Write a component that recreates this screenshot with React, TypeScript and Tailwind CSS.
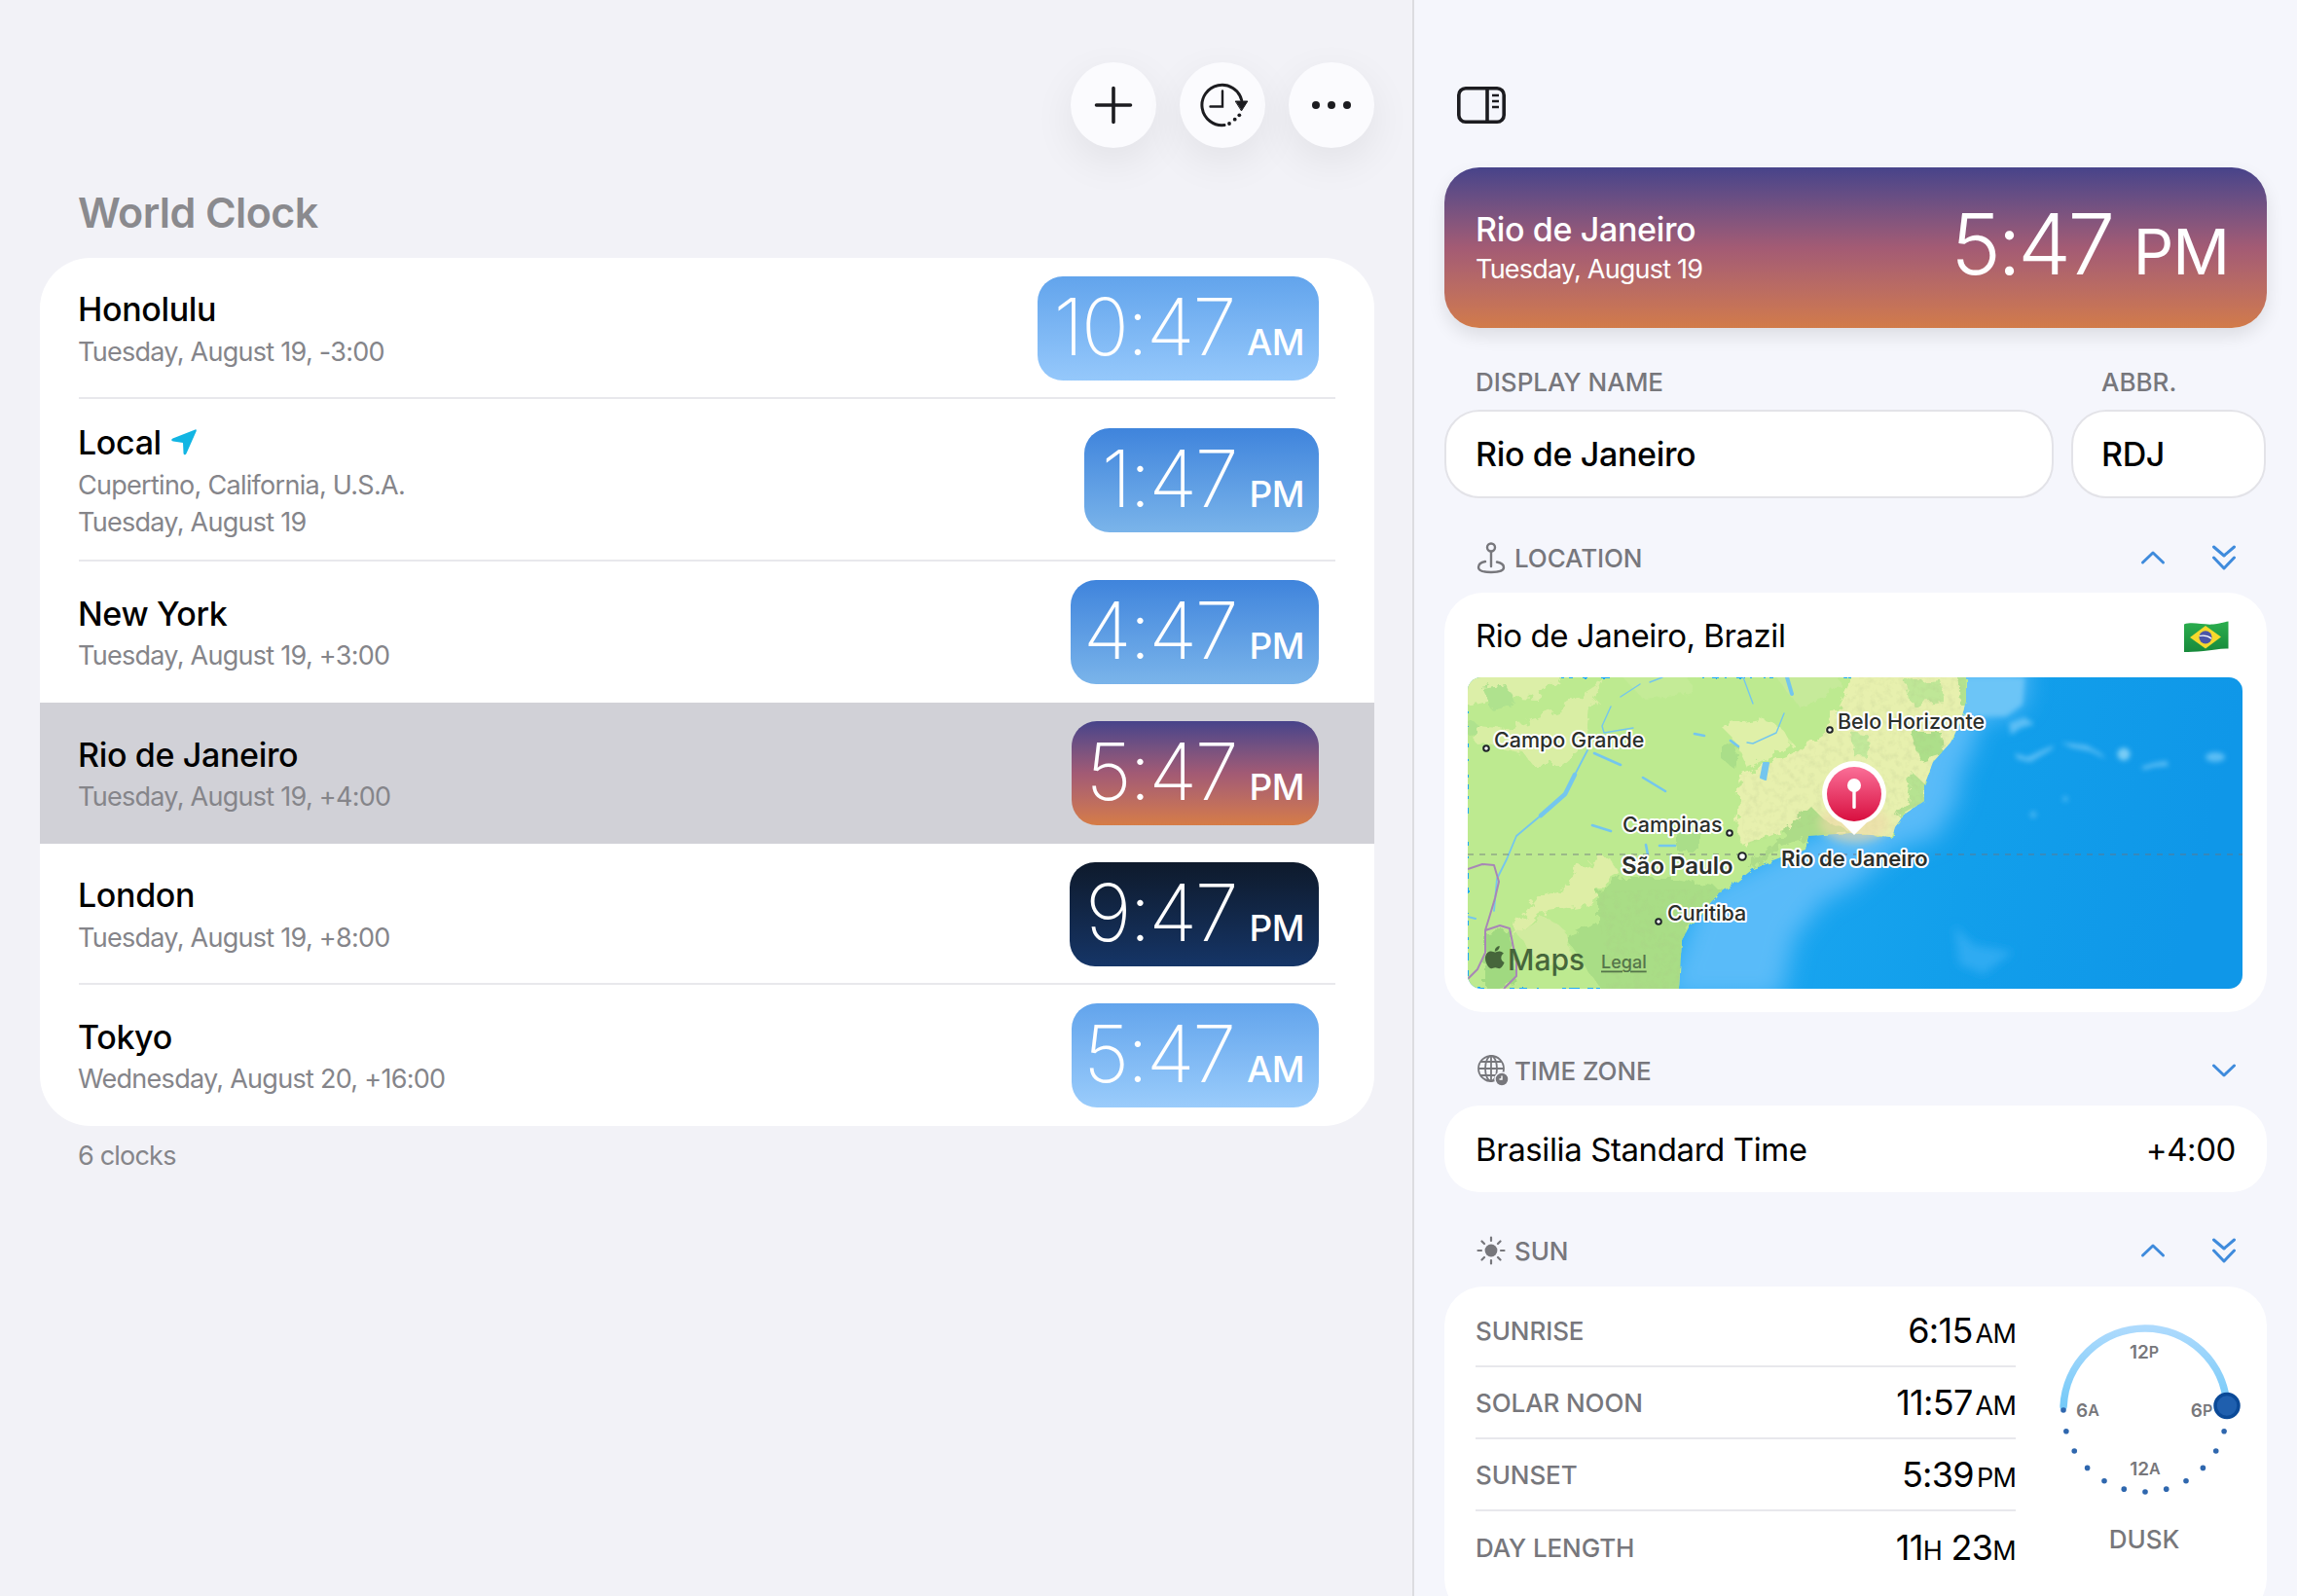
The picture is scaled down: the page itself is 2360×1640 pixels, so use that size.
import React from "react";

type Clock = { name: string; lines: string[]; time: string; unit: string; grad: string; width: string; selected?: boolean; local?: boolean; sep: boolean; tall?: boolean };

const clocks: Clock[] = [
  { name: "Honolulu", lines: ["Tuesday, August 19, -3:00"], time: "10:47", unit: "AM", grad: "bg-gradient-to-b from-[#62a4ec] to-[#95c8fb]", width: "w-[289px]", sep: true },
  { name: "Local", local: true, lines: ["Cupertino, California, U.S.A.", "Tuesday, August 19"], time: "1:47", unit: "PM", grad: "bg-gradient-to-b from-[#3f84dc] to-[#7ab4ea]", width: "w-[241px]", sep: true, tall: true },
  { name: "New York", lines: ["Tuesday, August 19, +3:00"], time: "4:47", unit: "PM", grad: "bg-gradient-to-b from-[#3f84dc] to-[#7ab4ea]", width: "w-[255px]", sep: false },
  { name: "Rio de Janeiro", selected: true, lines: ["Tuesday, August 19, +4:00"], time: "5:47", unit: "PM", grad: "bg-gradient-to-b from-[#47438a] via-[#a25a74] to-[#d67c45]", width: "w-[254px]", sep: false },
  { name: "London", lines: ["Tuesday, August 19, +8:00"], time: "9:47", unit: "PM", grad: "bg-gradient-to-b from-[#0e1a2c] to-[#153567]", width: "w-[256px]", sep: true },
  { name: "Tokyo", lines: ["Wednesday, August 20, +16:00"], time: "5:47", unit: "AM", grad: "bg-gradient-to-b from-[#62a4ec] to-[#9accfb]", width: "w-[254px]", sep: false },
];

function Chevron({ dir }: { dir: "up" | "down" }) {
  return (
    <svg width="26" height="20" viewBox="0 0 26 20" fill="none" stroke="#3f8bdc" strokeWidth="3" strokeLinecap="round" strokeLinejoin="round">
      <path d={dir === "up" ? "M2.5 15 L13 5 L23.5 15" : "M2.5 5 L13 15 L23.5 5"} />
    </svg>
  );
}

function DoubleDown() {
  return (
    <svg width="26" height="28" viewBox="0 0 26 28" fill="none" stroke="#3f8bdc" strokeWidth="3" strokeLinecap="round" strokeLinejoin="round">
      <path d="M2.5 3 L13 12 L23.5 3" />
      <path d="M2.5 14 L13 25 L23.5 14" />
    </svg>
  );
}

function SectionHead({ icon, title, mode }: { icon: React.ReactNode; title: string; mode: "both" | "down" }) {
  return (
    <div className="flex h-[40px] items-center pl-[64px] pr-[62px]">
      <div className="flex w-[39px] items-center">{icon}</div>
      <span className="text-[26px] font-medium tracking-[-0.1px] text-[#77777c]">{title}</span>
      <div className="ml-auto flex items-center gap-[47px]">
        {mode === "both" && <Chevron dir="up" />}
        {mode === "both" ? <DoubleDown /> : <Chevron dir="down" />}
      </div>
    </div>
  );
}

function RoundButton({ children }: { children: React.ReactNode }) {
  return (
    <button className="flex h-[88px] w-[88px] items-center justify-center rounded-full bg-[#fbfbfe] shadow-[0_14px_44px_rgba(0,0,0,0.07)]">
      {children}
    </button>
  );
}

function Row({ c }: { c: Clock }) {
  return (
    <div className={`pl-[40px] ${c.selected ? "bg-[#d1d1d7]" : ""}`}>
      <div className={`flex ${c.tall ? "h-[167px]" : "h-[145px]"} items-center justify-between ${c.sep ? "mr-[40px] border-b-2 border-[#e8e8ec] pr-[17px] pt-[2px]" : "pr-[57px]"}`}>
        <div className={`-ml-[1px] ${c.sep ? "pt-[2px]" : "pt-[3px]"}`}>
          <div className="flex h-[42px] items-center gap-[10px] text-[34px] font-medium tracking-[-0.35px] text-black">
            {c.name}
            {c.local && (
              <svg width="26" height="28" viewBox="0 0 26 28">
                <path d="M24.5 1.5 C25.5 1 26 2 25.7 3 L15.5 26 C14.5 28 12.5 27.5 12.5 25.5 L12 15 L2 13.5 C0 13 -0.5 11.5 1.5 10.5 Z" fill="#12b5e3" />
              </svg>
            )}
          </div>
          <div className={`${c.sep ? "mt-[5px]" : "mt-[4px]"} text-[27px] leading-[38px] tracking-[-0.72px] text-[#85858a]`}>
            {c.lines.map((l) => (
              <div key={l}>{l}</div>
            ))}
          </div>
        </div>
        <div className={`flex h-[107px] ${c.width} items-baseline justify-end rounded-[26px] pr-[15px] pt-[2px] text-white ${c.grad}`}>
          <span className="text-[81px] font-[250] leading-[100px] tracking-[-2.2px]">{c.time}</span>
          <span className="ml-[13px] text-[37px] font-medium tracking-[-0.5px]">{c.unit}</span>
        </div>
      </div>
    </div>
  );
}

function BrazilMap() {
  const label = "fill-[#2b2f2b] [paint-order:stroke] [stroke:white] [stroke-width:4px] [stroke-linejoin:round]";
  const cities: [number, number, number][] = [[19, 73, 2.8], [372, 54, 2.8], [269, 160, 2.8], [282, 184, 3.8], [196, 251, 2.8]];
  return (
    <svg width="796" height="320" viewBox="0 0 796 320" className="block rounded-[14px]">
      <defs>
        <linearGradient id="sea" x1="0" x2="1" y1="0" y2="0.1">
          <stop offset="0.3" stopColor="#1ea9f3" />
          <stop offset="0.7" stopColor="#129feb" />
          <stop offset="1" stopColor="#0f97e8" />
        </linearGradient>
        <linearGradient id="pinFill" x1="0" x2="0" y1="0" y2="1">
          <stop offset="0" stopColor="#fa6f98" />
          <stop offset="1" stopColor="#d80f3f" />
        </linearGradient>
        <filter id="blur12" x="-20%" y="-20%" width="140%" height="140%"><feGaussianBlur stdDeviation="12" /></filter>
        <filter id="blur4" x="-20%" y="-20%" width="140%" height="140%"><feGaussianBlur stdDeviation="5" /></filter>
        <filter id="blur2" x="-30%" y="-30%" width="160%" height="160%"><feGaussianBlur stdDeviation="2.4" /></filter>
        <filter id="rough" x="-5%" y="-5%" width="110%" height="110%">
          <feTurbulence type="fractalNoise" baseFrequency="0.09" numOctaves="3" seed="4" result="n" />
          <feDisplacementMap in="SourceGraphic" in2="n" scale="14" />
          <feGaussianBlur stdDeviation="0.7" />
        </filter>
        <filter id="roughS" x="-5%" y="-5%" width="110%" height="110%">
          <feTurbulence type="fractalNoise" baseFrequency="0.12" numOctaves="2" seed="7" result="n" />
          <feDisplacementMap in="SourceGraphic" in2="n" scale="6" />
        </filter>
        <filter id="hill" x="0" y="0" width="100%" height="100%">
          <feTurbulence type="fractalNoise" baseFrequency="0.14" numOctaves="3" seed="9" />
          <feColorMatrix values="0 0 0 0 0.42  0 0 0 0 0.5  0 0 0 0 0.25  0 0 0 1.7 -0.78" />
          <feComposite in2="SourceAlpha" operator="in" />
        </filter>
        <clipPath id="land">
          <path d="M0 0 H512 L512 24 L506 47 L496 67 L478 87 L469 111 L469 127 L448 141 L439 154 L436 164 L393 160 L350 163 L347 177 L320 187 L293 197 L273 213 L257 223 L227 257 L220 270 L217 320 H0 Z" />
        </clipPath>
      </defs>
      <rect width="796" height="320" fill="url(#sea)" />
      <path d="M500 -20 L575 -20 L573 25 L555 40 L525 42 L520 70 L505 100 L503 125 L480 165 L440 175 L395 215 L365 230 L335 268 L322 330 L200 330 L240 220 L380 150 L470 60 Z" fill="#5fbef9" fillOpacity="0.9" filter="url(#blur12)" />
      <path d="M505 0 H572 L570 28 L553 40 L510 40 Z" fill="#6cc5f7" filter="url(#blur2)" />
      <g fill="#5cbef5" filter="url(#blur2)">
        <path d="M556 47 L572 41 L582 48 L568 52 L558 59 Z" />
        <path d="M562 78 L575 82 L592 74 L602 70 L600 74 L578 87 L565 84 Z" />
        <path d="M610 67 L620 68 L636 70 L650 78 L656 84 L640 76 L620 72 Z" />
        <circle cx="674" cy="79" r="6.5" fill="#7acdf6" />
        <path d="M692 92 L705 88 L718 86 L720 91 L705 92 L695 95 Z" />
        <ellipse cx="768" cy="82" rx="10" ry="5" />
        <circle cx="614" cy="125" r="3" fill="#3fb3f2" />
        <circle cx="581" cy="141" r="3.5" fill="#3fb3f2" />
      </g>
      <g fill="#2eabf2" filter="url(#blur4)">
        <path d="M500 255 L520 275 L560 282 L530 305 L505 295 Z" />
      </g>
      <path d="M0 0 H512 L512 24 L506 47 L496 67 L478 87 L469 111 L469 127 L448 141 L439 154 L436 164 L393 160 L350 163 L347 177 L320 187 L293 197 L273 213 L257 223 L227 257 L220 270 L217 320 H0 Z" fill="#bdea90" filter="url(#roughS)" />
      <g clipPath="url(#land)">
        <g filter="url(#rough)">
          <path d="M-10 -10 H105 L70 22 L30 20 L-10 30 Z" fill="#dcefa8" />
          <path d="M15 12 L40 8 L50 28 L25 34 Z M0 45 L14 50 L5 62 L-5 60 Z" fill="#afe28e" />
          <path d="M93 33 L140 3 L127 33 L123 67 L97 90 L67 90 L57 77 L7 67 L10 50 L40 53 Z" fill="#d9eea4" />
          <path d="M150 -10 H235 L225 18 L180 22 Z" fill="#c4eb97" />
          <path d="M260 50 L300 43 L320 50 L333 67 L320 77 L287 93 L273 63 Z" fill="#dff0a8" />
          <path d="M280 100 L333 80 L367 57 L400 -10 H520 L515 40 L500 70 L480 90 L472 125 L450 145 L440 170 L390 168 L355 150 L327 157 L283 173 L277 160 Z" fill="#e7f0ae" />
          <path d="M310 -10 H395 L370 20 L340 30 Z" fill="#c6ea9a" />
          <path d="M450 5 L485 2 L490 25 L455 28 Z" fill="#bfe797" />
          <path d="M504 -5 H520 V28 L506 28 Z" fill="#b3e28f" />
          <path d="M454 57 L488 57 L490 77 L464 85 Z" fill="#addf8a" />
          <path d="M392 55 L412 60 L410 82 L395 80 Z" fill="#c2e99b" />
          <path d="M456 97 L472 112 L470 130 L441 146 L452 127 Z" fill="#b6e391" />
          <path d="M287 197 L353 133 L366 146 L395 160 L350 165 L317 176 L293 195 Z" fill="#addc88" />
          <path d="M70 227 L100 217 L110 197 L143 183 L157 203 L133 217 L130 233 L73 243 L47 267 L50 253 Z" fill="#deeea6" />
          <path d="M133 220 L160 207 L213 207 L262 217 L227 257 L220 330 L143 330 L100 267 L133 253 Z" fill="#a9dd86" />
          <path d="M50 262 L80 245 L100 260 L110 300 L70 290 Z" fill="#d1eb9f" />
          <path d="M18 262 L43 258 L50 317 L18 322 Z" fill="#a0d980" />
          <path d="M260 67 L277 70 L273 93 L260 83 Z M215 160 L240 158 L240 178 L215 178 Z" fill="#aade89" />
        </g>
        <path d="M280 100 L333 80 L367 57 L400 0 H512 L500 70 L470 125 L440 165 L355 150 L283 173 Z" fill="black" filter="url(#hill)" opacity="0.28" />
        <path d="M133 220 L260 217 L227 257 L218 320 L143 320 Z" fill="black" filter="url(#hill)" opacity="0.22" />
        <g fill="none" stroke="#74c6ee" strokeLinecap="round" strokeLinejoin="round">
          <path d="M123 75 L110 100 M75 142 L50 163 L40 187 L30 207 L27 240" strokeWidth="1.8" />
          <path d="M110 100 L100 120 L75 142" strokeWidth="4.5" />
          <path d="M177 7 L157 20 M147 30 L138 50 L140 57 L170 52 M187 5 L200 0 M325 37 L317 57 L293 68 L287 67 M283 0 L293 27" strokeWidth="1.4" />
          <path d="M130 78 L157 90 M180 103 L203 117 M128 152 L147 158 M233 58 L243 60 M197 173 L213 173 M183 172 L185 182 M270 65 L278 71" strokeWidth="2.6" />
          <path d="M328 0 L333 17" strokeWidth="4" />
          <path d="M0 246 L8 248" strokeWidth="2" />
          <path d="M304 88 L309 88 L306 105 L301 103 Z" fill="#74c6ee" strokeWidth="2" />
        </g>
        <g fill="none" stroke="#a886b6" strokeWidth="2" strokeLinejoin="round">
          <path d="M0 197 L15 192 L27 193 L32 210 L28 227 L22 247 L18 260 L33 255 L43 258 L50 293 L50 307 L37 320" />
          <path d="M18 260 L18 283 L10 300 L0 310" />
        </g>
      </g>
      <line x1="0" x2="796" y1="182" y2="182" stroke="#6b7280" strokeOpacity="0.55" strokeWidth="1.6" strokeDasharray="6 6" />
      {cities.map(([x, y, r]) => (
        <circle key={x} cx={x} cy={y} r={r} fill="white" stroke="#1f2328" strokeWidth="2" />
      ))}
      <g fontFamily="Inter, sans-serif" fontWeight="500" dominantBaseline="central">
        <text x="27" y="64" fontSize="21.5" className={label}>Campo Grande</text>
        <text x="380" y="45" fontSize="21.5" className={label}>Belo Horizonte</text>
        <text x="159" y="151" fontSize="21.5" className={label}>Campinas</text>
        <text x="158" y="193" fontSize="24" fontWeight="600" className={label}>São Paulo</text>
        <text x="322" y="186" fontSize="22" fontWeight="600" className={label}>Rio de Janeiro</text>
        <text x="205" y="242" fontSize="21.5" className={label}>Curitiba</text>
        <text x="41" y="290" fontSize="30" fill="#46663b">Maps</text>
        <text x="137" y="292" fontSize="18" fill="#55744a" textDecoration="underline">Legal</text>
      </g>
      <g transform="translate(17.8 274.3) scale(0.052)">
        <path fill="#46663b" d="M318.7 268.7c-.2-36.7 16.4-64.4 50-84.8-18.8-26.9-47.2-41.7-84.7-44.6-35.5-2.8-74.3 20.7-88.5 20.7-15 0-49.4-19.7-76.4-19.7C63.3 141.2 4 184.8 4 273.5q0 39.3 14.4 81.2c12.8 36.7 59 126.7 107.2 125.2 25.2-.6 43-17.9 75.8-17.9 31.8 0 48.3 17.9 76.4 17.9 48.6-.7 90.4-82.5 102.6-119.3-65.2-30.7-61.7-90-61.7-91.9zm-56.6-164.2c27.3-32.4 24.8-61.9 24-72.5-24.1 1.4-52 16.4-67.9 34.9-17.5 19.8-27.8 44.3-25.6 71.9 26.1 2 49.9-11.4 69.5-34.3z" />
      </g>
      <ellipse cx="397" cy="150" rx="36" ry="20" fill="#f0d8a8" fillOpacity="0.6" filter="url(#blur4)" />
      <path d="M397 86 a33 33 0 0 1 13 63.3 L397 162 L384 149.3 A33 33 0 0 1 397 86 Z" fill="white" />
      <circle cx="397" cy="120" r="28" fill="url(#pinFill)" />
      <circle cx="397" cy="111" r="7" fill="white" />
      <rect x="395.3" y="113" width="3.4" height="22" rx="1.5" fill="white" />
    </svg>
  );
}

function Dial() {
  const dots: [number, number][] = [];
  for (let i = 0; i <= 12; i++) {
    const a = ((i * 15) * Math.PI) / 180;
    dots.push([100 - 84 * Math.cos(a), 109 + 84 * Math.sin(a)]);
  }
  return (
    <svg width="200" height="280" viewBox="0 0 200 280" className="shrink-0">
      <defs>
        <linearGradient id="arcG" x1="0" x2="0" y1="0" y2="1">
          <stop offset="0" stopColor="#addafd" />
          <stop offset="1" stopColor="#75caf8" />
        </linearGradient>
      </defs>
      <path d="M16.1 105 A84 84 0 0 1 183.9 104.6" fill="none" stroke="url(#arcG)" strokeWidth="7.5" strokeLinecap="round" />
      {dots.map(([x, y], i) => (
        <circle key={i} cx={x} cy={y} r="2.8" fill="#2f67ae" />
      ))}
      <circle cx="184" cy="104.5" r="12" fill="#1f5fae" stroke="#0b4a98" strokeWidth="3.5" />
      <g fontFamily="Inter, sans-serif" textAnchor="middle" dominantBaseline="central" fontSize="19" fontWeight="600" fill="#77777b">
        <text x="99" y="49">12<tspan fontSize="16">P</tspan></text>
        <text x="41" y="109">6<tspan fontSize="16">A</tspan></text>
        <text x="158" y="109">6<tspan fontSize="16">P</tspan></text>
        <text x="100" y="169">12<tspan fontSize="16">A</tspan></text>
        <text x="99" y="241" fontSize="26" fontWeight="500">DUSK</text>
      </g>
    </svg>
  );
}

const unit = "ml-[3px] text-[27px] tracking-[-0.8px]";
const sunRows: { label: string; value: React.ReactNode }[] = [
  { label: "SUNRISE", value: <>6:15<small className={unit}>AM</small></> },
  { label: "SOLAR NOON", value: <>11:57<small className={unit}>AM</small></> },
  { label: "SUNSET", value: <>5:39<small className={unit}>PM</small></> },
  { label: "DAY LENGTH", value: <>11<small className="text-[27px]">H</small> 23<small className="text-[27px]">M</small></> },
];

export default function App() {
  return (
    <div className="flex h-[1640px] w-[2360px] overflow-hidden font-['Inter',sans-serif] text-black">
      <main className="h-full w-[1451px] shrink-0 bg-[#f2f2f7] pl-[41px] pr-[39px]">
        <div className="flex justify-end gap-[24px] pt-[64px]">
          <RoundButton>
            <svg width="40" height="40" viewBox="0 0 40 40" stroke="#1c1c20" strokeWidth="3.6" strokeLinecap="round">
              <path d="M20 2.5 V37.5 M2.5 20 H37.5" />
            </svg>
          </RoundButton>
          <RoundButton>
            <svg width="56" height="56" viewBox="-28 -28 56 56" fill="none" stroke="#1c1c20" strokeWidth="3" strokeLinecap="round">
              <path d="M19.7 -5 A20.7 20.7 0 1 0 2 20.6" />
              <path d="M0 -14.5 V1.5 H-12.5" strokeWidth="2.4" />
              <path d="M13.6 -4 H25.8 L19.7 5.6 Z" fill="#1c1c20" stroke="#1c1c20" strokeWidth="1" strokeLinejoin="round" />
              <circle cx="7" cy="19" r="1.9" fill="#1c1c20" stroke="none" />
              <circle cx="12.7" cy="14.7" r="1.9" fill="#1c1c20" stroke="none" />
              <circle cx="17.3" cy="10.3" r="1.9" fill="#1c1c20" stroke="none" />
            </svg>
          </RoundButton>
          <RoundButton>
            <svg width="44" height="12" viewBox="0 0 44 12" fill="#1c1c20">
              <circle cx="6" cy="6" r="4" />
              <circle cx="22" cy="6" r="4" />
              <circle cx="38" cy="6" r="4" />
            </svg>
          </RoundButton>
        </div>
        <h1 className="mt-[40px] h-[52px] pl-[39px] text-[43px] font-semibold leading-[52px] tracking-[-0.6px] text-[#8a8a8e]">World Clock</h1>
        <section className="mt-[21px] w-[1371px] overflow-hidden rounded-[52px] bg-white">
          {clocks.map((c) => (
            <Row key={c.time + c.name} c={c} />
          ))}
        </section>
        <p className="mt-[14px] pl-[39px] text-[27px] leading-[34px] tracking-[-0.8px] text-[#85858a]">6 clocks</p>
      </main>

      <aside className="h-full flex-1 border-l-2 border-[#dcdce0] bg-[#f5f6fc]">
        <div className="pl-[42px] pt-[87px]">
          <svg width="54" height="42" viewBox="0 0 54 42" fill="none" stroke="#1c1c20" strokeWidth="3.6" className="block">
            <rect x="3.8" y="3.8" width="46.4" height="34.4" rx="7" />
            <path d="M33 3.8 V38.2" />
            <path d="M38 11 H45 M38 17 H45 M38 23 H45" strokeWidth="2.6" />
          </svg>
        </div>

        <div className="mx-[31px] mt-[43px] flex h-[165px] items-center justify-between rounded-[36px] bg-gradient-to-b from-[#47438a] via-[#a35b74] to-[#d27b49] pl-[32px] pr-[39px] text-white shadow-[0_8px_18px_rgba(0,0,0,0.10)]">
          <div>
            <div className="text-[34px] font-medium leading-[42px] tracking-[-0.35px]">Rio de Janeiro</div>
            <div className="mt-[2px] text-[27px] leading-[36px] tracking-[-0.8px]">Tuesday, August 19</div>
          </div>
          <div className="flex items-baseline">
            <span className="text-[87px] font-[280] leading-[100px] tracking-[-3.5px]">5:47</span>
            <span className="ml-[22px] text-[65px] font-normal leading-[100px] tracking-[-1px]">PM</span>
          </div>
        </div>

        <div className="ml-[31px] mr-[31px] mt-[41px] grid grid-cols-[626px_200px] gap-x-[18px] gap-y-[13px]">
          <span className="h-[30px] pl-[32px] text-[26px] font-medium leading-[30px] text-[#77777c]">DISPLAY NAME</span>
          <span className="h-[30px] pl-[31px] text-[26px] font-medium leading-[30px] text-[#77777c]">ABBR.</span>
          <div className="flex h-[91px] items-center rounded-[36px] border-2 border-[#e3e3e8] bg-white pl-[30px] text-[34px] font-medium tracking-[-0.35px]">Rio de Janeiro</div>
          <div className="flex h-[91px] items-center rounded-[36px] border-2 border-[#e3e3e8] bg-white pl-[29px] text-[34px] font-medium tracking-[-0.35px]">RDJ</div>
        </div>

        <div className="mt-[41px]">
          <SectionHead
            title="LOCATION"
            mode="both"
            icon={
              <svg width="30" height="34" viewBox="0 0 30 34" fill="none" stroke="#77777c" strokeWidth="2.4" strokeLinecap="round">
                <circle cx="15" cy="6.5" r="4" />
                <path d="M15 11 V26" />
                <path d="M9 21 C4 22 2 24.5 2 27 C2 30.5 7 32 15 32 C23 32 28 30.5 28 27 C28 24.5 26 22.5 21 21.5" />
              </svg>
            }
          />
        </div>
        <section className="mx-[31px] mt-[16px] rounded-[40px] bg-white px-[24px] pb-[24px]">
          <div className="flex h-[87px] items-center pl-[8px] pr-[15px] pt-[2px]">
            <span className="text-[33px] tracking-[-0.45px]">Rio de Janeiro, Brazil</span>
            <svg width="46" height="32" viewBox="0 0 46 32" className="ml-auto">
              <defs>
                <linearGradient id="flagG" x1="0" x2="0" y1="0" y2="1">
                  <stop offset="0" stopColor="#2bae4e" />
                  <stop offset="1" stopColor="#178a3b" />
                </linearGradient>
              </defs>
              <path d="M0 3.5 C9 0.5 20 4.5 30 3.5 C36 3 41 1 45.5 0.5 V28.5 C38 28 30 30 20 31 C12 31.8 5 32 0 32 Z" fill="url(#flagG)" />
              <path d="M22 5 L38 16.5 L22 28.5 L6 17 Z" fill="#f6d92c" />
              <circle cx="22" cy="16.8" r="6.6" fill="#4a55a8" />
              <path d="M15.8 15.5 C20 14.6 25 15.6 28.2 18.2" stroke="white" strokeWidth="1.2" fill="none" />
            </svg>
          </div>
          <BrazilMap />
        </section>

        <div className="mt-[40px]">
          <SectionHead
            title="TIME ZONE"
            mode="down"
            icon={
              <svg width="34" height="34" viewBox="0 0 34 34" fill="none" stroke="#77777c" strokeWidth="1.8">
                <circle cx="15" cy="15" r="13" />
                <ellipse cx="15" cy="15" rx="6" ry="13" />
                <path d="M15 2 V28 M2 15 H28 M4 8 H26 M4 22 H26" />
                <circle cx="26" cy="26" r="7" fill="#77777c" stroke="#f5f6fc" strokeWidth="1.5" />
                <path d="M26 22.5 V26 H23.5" stroke="white" strokeWidth="1.4" />
              </svg>
            }
          />
        </div>
        <section className="mx-[31px] mt-[16px] flex h-[89px] items-center justify-between rounded-[36px] bg-white px-[32px] pt-[2px] text-[33px] tracking-[-0.4px]">
          <span>Brasilia Standard Time</span>
          <span>+4:00</span>
        </section>

        <div className="mt-[40px]">
          <SectionHead
            title="SUN"
            mode="both"
            icon={
              <svg width="30" height="30" viewBox="0 0 30 30" fill="#77777c" stroke="#77777c" strokeWidth="2.2" strokeLinecap="round">
                <circle cx="15" cy="15" r="6.4" stroke="none" />
                <path d="M15 1.5 V5 M15 25 V28.5 M1.5 15 H5 M25 15 H28.5 M5.5 5.5 L8 8 M22 22 L24.5 24.5 M5.5 24.5 L8 22 M22 8 L24.5 5.5" />
              </svg>
            }
          />
        </div>
        <section className="mx-[31px] mt-[17px] flex h-[340px] rounded-[40px] bg-white pl-[32px]">
          <div className="w-[555px] pt-[9px]">
            {sunRows.map((r, i) => (
              <div key={r.label} className={`flex h-[74px] items-center justify-between ${i < 3 ? "border-b-2 border-[#e8e8ec]" : ""}`}>
                <span className="text-[26px] font-medium tracking-[-0.1px] text-[#77777c]">{r.label}</span>
                <span className="text-[36px] tracking-[-0.7px]">{r.value}</span>
              </div>
            ))}
          </div>
          <div className="ml-[33px] pt-[18px]">
            <Dial />
          </div>
        </section>
      </aside>
    </div>
  );
}
